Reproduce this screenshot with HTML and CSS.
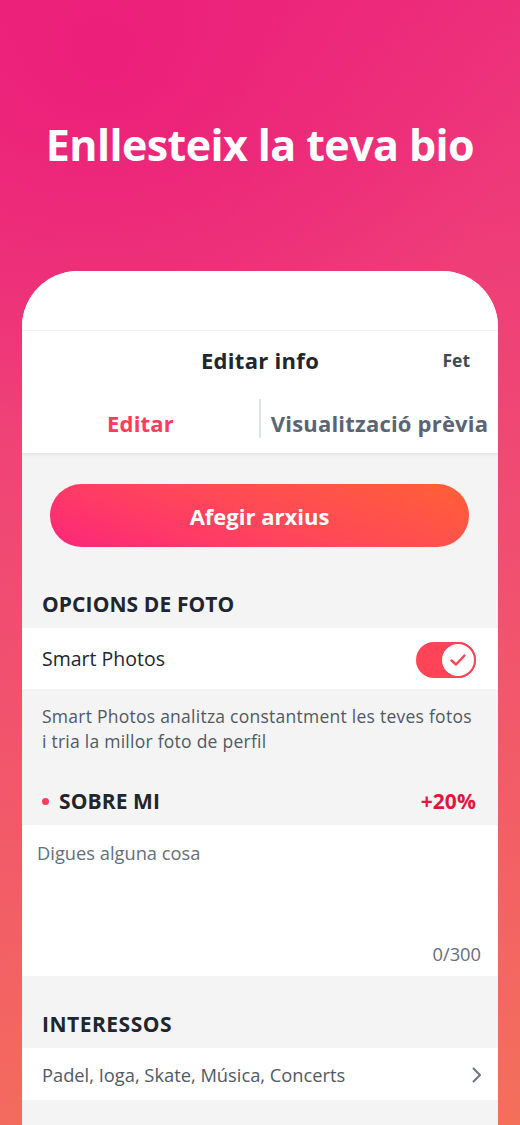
FILE: index.html
```html
<!DOCTYPE html>
<html>
  <head>
    <meta charset="UTF-8">
    <title>Editar info</title>
    <link rel="stylesheet" href="styles.css">
  </head>
  <body>
    <h1 class="hero">Enllesteix la teva bio</h1>
    <div class="phone">
      <div class="phone-top"></div>
      <div class="navbar">
        <span class="navbar-title">Editar info</span>
        <span class="navbar-done">Fet</span>
      </div>
      <div class="tabs">
        <div class="tab tab-active">Editar</div>
        <div class="tab-divider"></div>
        <div class="tab">Visualització prèvia</div>
      </div>
      <div class="content">
        <div class="add-wrap">
          <button class="add-button">Afegir arxius</button>
        </div>
        <div class="section-title">OPCIONS DE FOTO</div>
        <div class="row">
          <span>Smart Photos</span>
          <div class="toggle">
            <div class="toggle-knob">
              <svg width="18" height="14" viewBox="0 0 18 14">
                <path d="M2.5 7.5 L7 11.5 L15.5 2.5" fill="none" stroke="#ff4458" stroke-width="2.4" stroke-linecap="round" stroke-linejoin="round"/>
              </svg>
            </div>
          </div>
        </div>
        <p class="note">Smart Photos analitza constantment les teves fotos i tria la millor foto de perfil</p>
        <div class="section-title section-about">
          <span class="dot"></span>
          <span class="about-label">SOBRE MI</span>
          <span class="percent">+20%</span>
        </div>
        <div class="bio">
          <div class="bio-placeholder">Digues alguna cosa</div>
          <div class="bio-count">0/300</div>
        </div>
        <div class="section-title section-interests">INTERESSOS</div>
        <div class="row row-link">
          <span>Padel, Ioga, Skate, Música, Concerts</span>
          <svg class="chevron" width="12" height="18" viewBox="0 0 12 18">
            <path d="M2.5 2.5 L9 9 L2.5 15.5" fill="none" stroke="#6b7482" stroke-width="2" stroke-linecap="round" stroke-linejoin="round"/>
          </svg>
        </div>
      </div>
    </div>
  </body>
</html>
```

FILE: styles.css
```css
html, body {
  margin: 0;
  padding: 0;
}

body {
  width: 520px;
  height: 1125px;
  overflow: hidden;
  font-family: "Open Sans", "Liberation Sans", sans-serif;
  color: #21262e;
  background:
    radial-gradient(ellipse 420px 380px at 20% 5%, rgba(236, 30, 122, 0.9), rgba(236, 30, 122, 0) 100%),
    linear-gradient(170deg, #ec2a7b 0%, #ef4277 35%, #f25b68 70%, #f3705a 100%);
}

.hero {
  margin: 0;
  padding-top: 117px;
  height: 271px;
  box-sizing: border-box;
  text-align: center;
  color: #fff;
  font-size: 43px;
  line-height: 56px;
  font-weight: 700;
  letter-spacing: -0.6px;
}

.phone {
  margin: 0 22px;
  height: 854px;
  background: #f4f4f4;
  border-radius: 56px 56px 0 0;
  overflow: hidden;
}

.phone-top {
  height: 59px;
  background: #fff;
  border-bottom: 1px solid #f3f3f3;
}

.navbar {
  position: relative;
  height: 60px;
  background: #fff;
  display: flex;
  align-items: center;
  justify-content: center;
}

.navbar-title {
  font-size: 22px;
  font-weight: 700;
  color: #21262e;
  letter-spacing: 0.3px;
  margin-top: -2px;
}

.navbar-done {
  position: absolute;
  right: 28px;
  top: 17px;
  font-size: 17.5px;
  font-weight: 700;
  color: #424850;
}

.tabs {
  height: 62px;
  background: #fff;
  display: flex;
  align-items: center;
  box-shadow: 0 2px 3px rgba(0, 0, 0, 0.07);
  position: relative;
}

.tab {
  flex: 1;
  text-align: center;
  font-size: 22px;
  font-weight: 700;
  color: #5b6472;
  padding-top: 2px;
  letter-spacing: 0.2px;
}

.tab-active {
  color: #fd3c5a;
}

.tab-divider {
  width: 2px;
  height: 39px;
  margin-bottom: 7px;
  background: #dfe3e8;
}

.content {
  background: #f4f4f4;
}

.add-wrap {
  padding: 31px 29px 0 28px;
}

.add-button {
  display: block;
  width: 100%;
  height: 63px;
  border: none;
  border-radius: 32px;
  background: linear-gradient(20deg, #fd267a 0%, #ff4858 50%, #ff6036 100%);
  color: #fff;
  font-family: inherit;
  font-size: 22px;
  font-weight: 700;
}

.section-title {
  padding: 45px 20px 12px;
  font-size: 21px;
  line-height: 24px;
  font-weight: 700;
  color: #21262e;
  letter-spacing: 0.1px;
}

.row {
  height: 61px;
  background: #fff;
  display: flex;
  align-items: center;
  justify-content: space-between;
  padding: 0 22px 0 20px;
  font-size: 19.5px;
  color: #21262e;
}

.toggle {
  width: 60px;
  height: 36px;
  border-radius: 18px;
  background: #ff4458;
  display: flex;
  align-items: center;
  justify-content: flex-end;
  margin-top: 3px;
}

.toggle-knob {
  width: 32px;
  height: 32px;
  border-radius: 50%;
  background: #fff;
  border: 2px solid #ff4458;
  display: flex;
  align-items: center;
  justify-content: center;
}

.note {
  margin: 0;
  padding: 15px 24px 0 20px;
  font-size: 17.5px;
  line-height: 25px;
  color: #505965;
  letter-spacing: 0.25px;
}

.section-about {
  display: flex;
  align-items: center;
  padding-top: 35px;
  padding-right: 22px;
}

.dot {
  width: 7px;
  height: 7px;
  border-radius: 50%;
  background: #fd3c5a;
  margin: 0 10px 0 0;
}

.about-label {
  flex: 1;
}

.percent {
  color: #e2163d;
}

.bio {
  height: 151px;
  background: #fff;
  display: flex;
  flex-direction: column;
  justify-content: space-between;
  padding: 17px 17px 11px 15px;
  box-sizing: border-box;
  font-size: 18.3px;
  line-height: 22px;
  color: #656e7b;
}

.bio-count {
  text-align: right;
}

.section-interests {
  padding-top: 36px;
  letter-spacing: 0.5px;
}

.row-link {
  height: 52px;
  font-size: 18.3px;
  color: #505965;
  padding-right: 15px;
}

.chevron {
  margin-top: 1px;
}
```
